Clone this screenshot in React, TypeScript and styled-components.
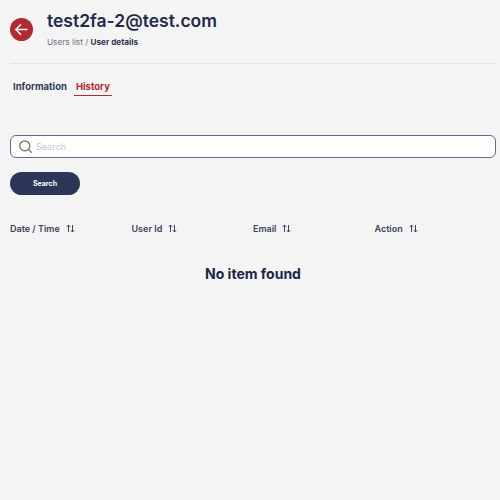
import React from 'react'
import styled, { createGlobalStyle } from 'styled-components'

const GlobalStyle = createGlobalStyle`
  html, body {
    margin: 0;
    padding: 0;
    background: #f4f4f4;
    font-family: "Inter", "Liberation Sans", sans-serif;
  }
`

const Page = styled.div`
  width: 500px;
  height: 500px;
  box-sizing: border-box;
  overflow: hidden;
  padding: 9px 4px 0 10px;
  color: #1f2a4d;
`

const Header = styled.header`
  display: flex;
  align-items: flex-start;
  gap: 14px;
  height: 54px;
  border-bottom: 1px solid #e3e3e3;
`

const BackButton = styled.button`
  width: 23px;
  height: 23px;
  padding: 0;
  border: none;
  border-radius: 50%;
  background: #b02a30;
  display: flex;
  align-items: center;
  justify-content: center;
  margin-top: 9px;
`

const TitleBlock = styled.div`
  display: flex;
  flex-direction: column;
  gap: 5px;
  margin-top: 1px;
`

const Title = styled.h1`
  margin: 0;
  font-size: 17.5px;
  line-height: 22px;
  font-weight: 600;
  color: #1f2a4d;
`

const Crumbs = styled.div`
  font-size: 8.2px;
  line-height: 10px;
  color: #6d7385;
`

const CrumbCurrent = styled.span`
  font-weight: 700;
  color: #2b3553;
`

const Tabs = styled.nav`
  display: flex;
  gap: 5px;
  margin: 16px 0 0 1px;
`

const Tab = styled.div<{ $active?: boolean }>`
  padding: 0 2px 2px;
  font-size: 9.5px;
  line-height: 13px;
  font-weight: 700;
  color: ${p => (p.$active ? '#b02a30' : '#2f3957')};
  border-bottom: 1px solid ${p => (p.$active ? '#b02a30' : 'transparent')};
`

const SearchBox = styled.div`
  display: flex;
  align-items: center;
  gap: 3px;
  height: 23px;
  box-sizing: border-box;
  margin-top: 39px;
  padding-left: 7px;
  background: #fff;
  border: 1px solid #5f6b8c;
  border-radius: 6px;
`

const Placeholder = styled.span`
  font-size: 9px;
  color: #c4c8d0;
`

const SearchButton = styled.button`
  display: block;
  width: 70px;
  height: 23px;
  margin-top: 14px;
  padding: 0;
  border: none;
  border-radius: 12px;
  background: #2b3658;
  color: #fff;
  font-family: inherit;
  font-size: 7px;
  font-weight: 700;
`

const TableHead = styled.div`
  display: grid;
  grid-template-columns: repeat(4, 121.5px);
  margin-top: 27px;
`

const HeadCell = styled.div`
  display: flex;
  align-items: center;
  gap: 6px;
  height: 12px;
  font-size: 9px;
  font-weight: 600;
  color: #3a4460;
`

const Empty = styled.div`
  margin-top: 31px;
  text-align: center;
  font-size: 14px;
  line-height: 18px;
  font-weight: 700;
  color: #1c2547;
`

const SortIcon = () => (
  <svg width="9" height="9" viewBox="0 0 9 9" fill="none" stroke="#3a4460" strokeWidth="1">
    <path d="M2.5 8V1M.8 2.8 2.5 1l1.7 1.8M6.5 1v7M4.8 6.2 6.5 8l1.7-1.8" />
  </svg>
)

const columns = ['Date / Time', 'User Id', 'Email', 'Action']

const App: React.FC = () => {
  return (
    <Page>
      <GlobalStyle />
      <Header>
        <BackButton aria-label="Back">
          <svg width="15" height="15" viewBox="0 0 15 15" fill="none" stroke="#fff" strokeWidth="1.5">
            <path d="M13.5 7.5H2M7 2.2 1.8 7.5 7 12.8" />
          </svg>
        </BackButton>
        <TitleBlock>
          <Title>test2fa-2@test.com</Title>
          <Crumbs>
            Users list / <CrumbCurrent>User details</CrumbCurrent>
          </Crumbs>
        </TitleBlock>
      </Header>

      <Tabs>
        <Tab>Information</Tab>
        <Tab $active>History</Tab>
      </Tabs>

      <SearchBox>
        <svg width="15" height="15" viewBox="0 0 15 15" fill="none" stroke="#666" strokeWidth="1.2">
          <circle cx="6.8" cy="6.8" r="5" />
          <path d="m10.5 10.5 3.2 3.2" />
        </svg>
        <Placeholder>Search</Placeholder>
      </SearchBox>

      <SearchButton>Search</SearchButton>

      <TableHead>
        {columns.map(c => (
          <HeadCell key={c}>
            {c}
            <SortIcon />
          </HeadCell>
        ))}
      </TableHead>

      <Empty>No item found</Empty>
    </Page>
  )
}

export default App
